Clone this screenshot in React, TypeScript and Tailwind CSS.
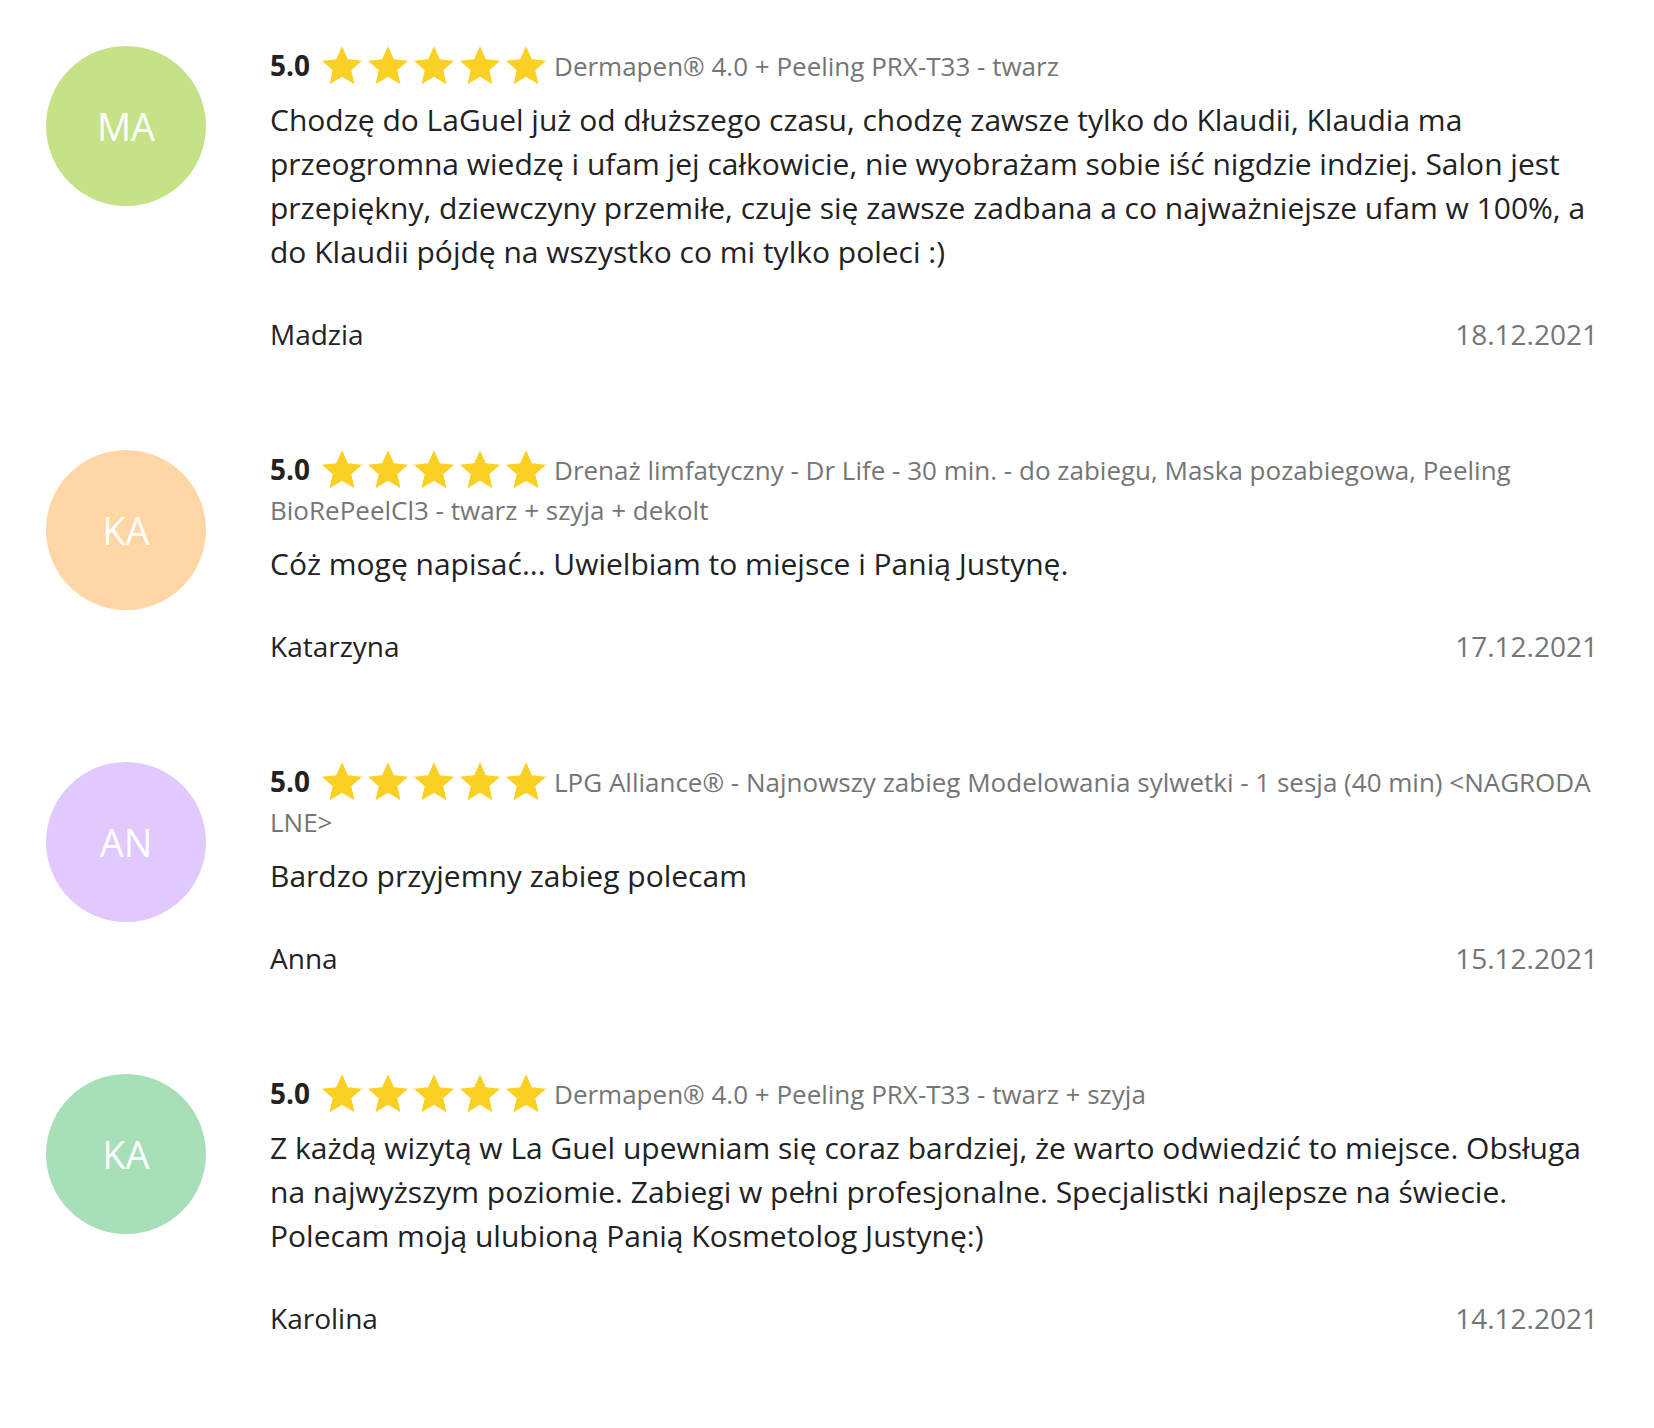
const reviews = [
  {
    initials: "MA",
    color: "bg-[#c5e287]",
    service: "Dermapen® 4.0 + Peeling PRX-T33 - twarz",
    text: "Chodzę do LaGuel już od dłuższego czasu, chodzę zawsze tylko do Klaudii, Klaudia ma przeogromna wiedzę i ufam jej całkowicie, nie wyobrażam sobie iść nigdzie indziej. Salon jest przepiękny, dziewczyny przemiłe, czuje się zawsze zadbana a co najważniejsze ufam w 100%, a do Klaudii pójdę na wszystko co mi tylko poleci :)",
    name: "Madzia",
    date: "18.12.2021",
  },
  {
    initials: "KA",
    color: "bg-[#ffd6a4]",
    service:
      "Drenaż limfatyczny - Dr Life - 30 min. - do zabiegu, Maska pozabiegowa, Peeling BioRePeelCl3 - twarz + szyja + dekolt",
    text: "Cóż mogę napisać... Uwielbiam to miejsce i Panią Justynę.",
    name: "Katarzyna",
    date: "17.12.2021",
  },
  {
    initials: "AN",
    color: "bg-[#e1c9fd]",
    service:
      "LPG Alliance® - Najnowszy zabieg Modelowania sylwetki - 1 sesja (40 min) <NAGRODA LNE>",
    text: "Bardzo przyjemny zabieg polecam",
    name: "Anna",
    date: "15.12.2021",
  },
  {
    initials: "KA",
    color: "bg-[#a7dfb8]",
    service: "Dermapen® 4.0 + Peeling PRX-T33 - twarz + szyja",
    text: "Z każdą wizytą w La Guel upewniam się coraz bardziej, że warto odwiedzić to miejsce. Obsługa na najwyższym poziomie. Zabiegi w pełni profesjonalne. Specjalistki najlepsze na świecie. Polecam moją ulubioną Panią Kosmetolog Justynę:)",
    name: "Karolina",
    date: "14.12.2021",
  },
];

function Star() {
  return (
    <svg
      viewBox="0 0 24 24"
      className="inline-block h-[44px] w-[44px] align-top -my-[2px] mr-[2px]"
      aria-hidden
    >
      <path
        fill="#f9d023"
        d="M12 1.2l3.2 7.1 7.7.8-5.8 5.2 1.7 7.6L12 17.9l-6.8 4 1.7-7.6-5.8-5.2 7.7-.8z"
      />
    </svg>
  );
}

export default function App() {
  return (
    <div className="min-h-screen bg-white font-['Open_Sans',sans-serif] text-[#222]">
      <div className="flex flex-col pl-[46px] pr-[56px] pt-[46px]">
        {reviews.map((r, i) => (
          <article key={i} className="flex gap-[64px] pb-[94px]">
            <div
              className={`flex h-[160px] w-[160px] shrink-0 items-center justify-center rounded-full ${r.color}`}
            >
              <span className="text-[38px] leading-none text-white">{r.initials}</span>
            </div>
            <div className="flex-1">
              <p className="text-[26px] leading-[40px] text-[#757575]">
                <span className="mr-[10px] text-[28px] leading-none font-bold text-[#222]">5.0</span>
                <Star />
                <Star />
                <Star />
                <Star />
                <Star />
                <span className="ml-[4px]">{r.service}</span>
              </p>
              <p className="mt-[12px] text-[30px] leading-[44px]">{r.text}</p>
              <div className="mt-[38px] flex justify-between text-[28px] leading-[44px]">
                <span>{r.name}</span>
                <span className="text-[#757575]">{r.date}</span>
              </div>
            </div>
          </article>
        ))}
      </div>
    </div>
  );
}
